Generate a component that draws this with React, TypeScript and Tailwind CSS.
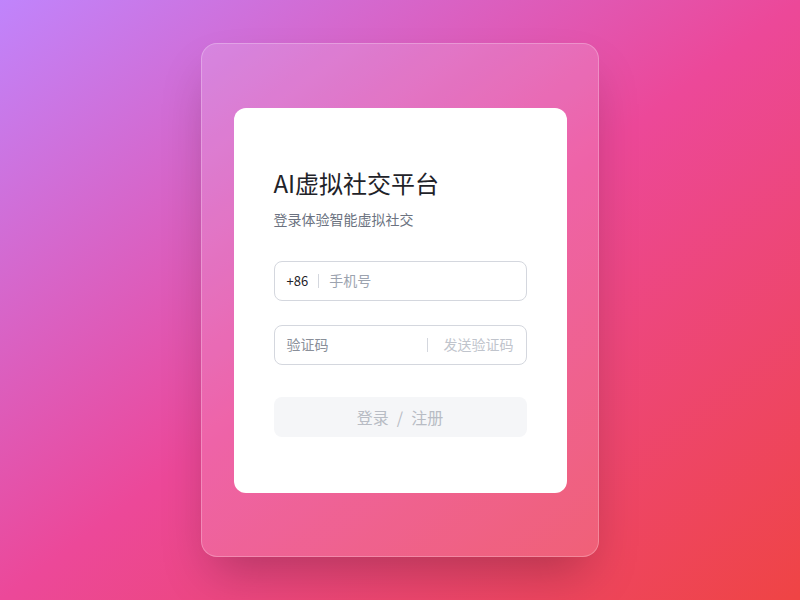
import React from "react";

export default function App() {
  return (
    <div
      className="w-[800px] h-[600px] flex items-center justify-center bg-[linear-gradient(to_bottom_right,#c084fc,#ec4899,#ef4444)]"
      style={{ fontFamily: '"Noto Sans CJK SC", sans-serif' }}
    >
      <div className="w-[398px] h-[514px] rounded-2xl bg-white/15 border border-white/25 shadow-2xl flex items-center justify-center">
        <div className="w-[333px] h-[385px] rounded-xl bg-white px-10 pt-[59px]">
          <h1 className="text-[24px] leading-8 text-[#1f2329] font-normal">AI虚拟社交平台</h1>
          <p className="mt-[10px] text-[14px] leading-5 text-[#6b7280]">登录体验智能虚拟社交</p>

          <div className="mt-8 h-10 rounded-lg border border-[#d4d7de] flex items-center px-3">
            <span className="text-[13px] text-[#1f2329]">+86</span>
            <span className="mx-[10px] w-px h-[14px] bg-[#d4d7de]" />
            <span className="text-[14px] text-[#9ca3af]">手机号</span>
          </div>

          <div className="mt-6 h-10 rounded-lg border border-[#d4d7de] flex items-center pl-3 pr-3">
            <span className="flex-1 text-[14px] text-[#8a8f99]">验证码</span>
            <span className="w-px h-[14px] bg-[#d4d7de] mr-4" />
            <span className="text-[14px] text-[#c0c4cc]">发送验证码</span>
          </div>

          <div className="mt-8 h-10 rounded-lg bg-[#f5f6f8] flex items-center justify-center text-[16px] text-[#b8bcc4]">
            <span>登录</span>
            <span className="mx-[8px]">/</span>
            <span>注册</span>
          </div>
        </div>
      </div>
    </div>
  );
}
